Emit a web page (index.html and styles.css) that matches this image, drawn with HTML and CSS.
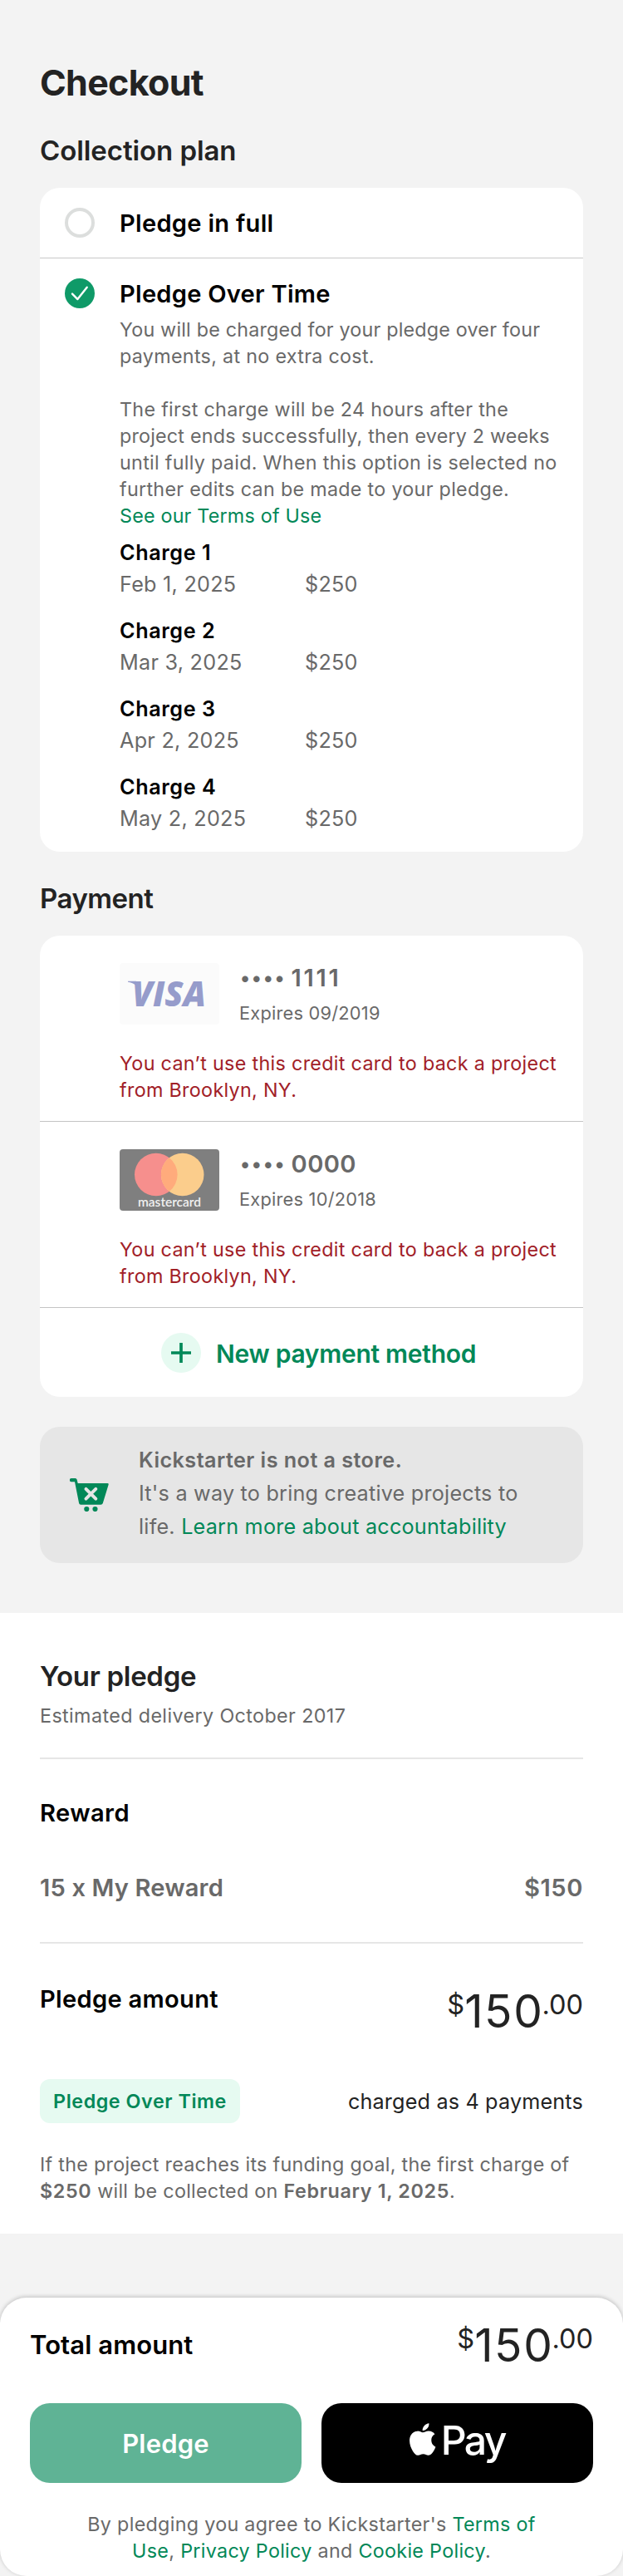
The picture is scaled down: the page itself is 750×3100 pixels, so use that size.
FILE: index.html
```html
<!DOCTYPE html>
<html lang="en">
<head>
<meta charset="utf-8">
<title>Checkout</title>
<link rel="stylesheet" href="styles.css">
</head>
<body>
<main class="page">
  <h1 class="title">Checkout</h1>

  <h2 class="heading">Collection plan</h2>
  <section class="card">
    <div class="plan">
      <span class="radio"></span>
      <h3 class="plan-name in-full">Pledge in full</h3>
    </div>
    <div class="plan plan-selected">
      <svg class="check" viewBox="0 0 36 36"><circle cx="18" cy="18" r="18" fill="#0f9a68"/><path d="M9 18.6l6.4 6.5L26.7 10.8" fill="none" stroke="#fff" stroke-width="2.4" stroke-linecap="round" stroke-linejoin="round"/></svg>
      <div class="plan-body">
        <h3 class="plan-name">Pledge Over Time</h3>
        <p class="plan-text"><span class="tight">You will be charged for your pledge over four</span><br>payments, at no extra cost.<br><br>The first charge will be 24 hours after the<br><span class="tight">project ends successfully, then every 2 weeks</span><br>until fully paid. When this option is selected no<br>further edits can be made to your pledge.<br><a class="link terms">See our Terms of Use</a></p>
        <div class="charges">
          <div class="charge"><b class="charge-name">Charge 1</b><span class="charge-date">Feb 1, 2025</span><span class="charge-sum">$250</span></div>
          <div class="charge"><b class="charge-name">Charge 2</b><span class="charge-date">Mar 3, 2025</span><span class="charge-sum">$250</span></div>
          <div class="charge"><b class="charge-name">Charge 3</b><span class="charge-date">Apr 2, 2025</span><span class="charge-sum">$250</span></div>
          <div class="charge"><b class="charge-name">Charge 4</b><span class="charge-date">May 2, 2025</span><span class="charge-sum">$250</span></div>
        </div>
      </div>
    </div>
  </section>

  <h2 class="heading heading-payment">Payment</h2>
  <section class="card">
    <div class="method">
      <div class="method-row">
        <svg class="brand" viewBox="0 0 120 74"><rect width="120" height="74" rx="4" fill="#fbfbfb"/><path d="M10 21.8h10l4 11c-2-5-7-9-14-10z" fill="#969ccb"/><text class="visa" x="15" y="52" textLength="89" lengthAdjust="spacingAndGlyphs">VISA</text></svg>
        <div class="method-info">
          <div class="number"><span class="dots"><i>•</i><i>•</i><i>•</i><i>•</i></span><span class="digits ones">1111</span></div>
          <div class="expires">Expires 09/2019</div>
        </div>
      </div>
      <p class="error">You can’t use this credit card to back a project<br>from Brooklyn, NY.</p>
    </div>
    <div class="method">
      <div class="method-row">
        <svg class="brand" viewBox="0 0 120 74"><rect width="120" height="74" rx="4" fill="#7f7f7f"/><circle cx="43.8" cy="30.5" r="25.8" fill="#f68f8d"/><circle cx="75.7" cy="30.5" r="25.8" fill="#fbcd8c"/><path d="M59.75 10.2a25.8 25.8 0 0 1 0 40.6a25.8 25.8 0 0 1 0-40.6z" fill="#ffab7c"/><text class="mastercard" x="22" y="69.4" textLength="76">mastercard</text></svg>
        <div class="method-info">
          <div class="number"><span class="dots"><i>•</i><i>•</i><i>•</i><i>•</i></span><span class="digits">0000</span></div>
          <div class="expires">Expires 10/2018</div>
        </div>
      </div>
      <p class="error">You can’t use this credit card to back a project<br>from Brooklyn, NY.</p>
    </div>
    <div class="add">
      <svg class="plus" viewBox="0 0 48 48"><circle cx="24" cy="24" r="24" fill="#e6faf1"/><path d="M24 12v24M12 24h24" stroke="#028858" stroke-width="3.7"/></svg>
      <span class="add-label">New payment method</span>
    </div>
  </section>

  <aside class="notice">
    <svg class="cart" viewBox="0 0 48 40"><path d="M2 0H6.6Q8.2 0 8.6 1.6L9.7 6H45.4Q47.1 6 46.6 7.8L39.8 30Q39.2 31.8 37.4 31.8H13.2Q11.5 31.8 11.1 30L6 4.2H2A2.1 2.1 0 0 1 2 0z" fill="#028858"/><circle cx="20.3" cy="37" r="3.1" fill="#028858"/><circle cx="30.5" cy="37" r="3.1" fill="#028858"/><path d="M19.5 12.9l11.8 11.8M31.3 12.9L19.5 24.7" stroke="#e6e6e6" stroke-width="4" stroke-linecap="round"/></svg>
    <p class="notice-text"><b>Kickstarter is not a store.</b><br>It's a way to bring creative projects to<br>life. <a class="link">Learn more about accountability</a></p>
  </aside>
</main>

<section class="summary">
  <h2 class="heading">Your pledge</h2>
  <p class="delivery">Estimated delivery October 2017</p>
  <hr class="rule">
  <h3 class="label">Reward</h3>
  <div class="reward-row"><span>15 x My Reward</span><span class="reward-sum">$150</span></div>
  <hr class="rule rule-second">
  <div class="amount-row">
    <h3 class="label pledge-label">Pledge amount</h3>
    <div class="price"><span class="small">$</span><span class="big">150</span><span class="small cents">.00</span></div>
  </div>
  <div class="plot-row">
    <span class="badge">Pledge Over Time</span>
    <span class="charged">charged as 4 payments</span>
  </div>
  <p class="goal">If the project reaches its funding goal, the first charge of<br><b>$250</b> will be collected on <b>February 1, 2025</b>.</p>
</section>

<footer class="sheet">
  <div class="total-row">
    <h3 class="total">Total amount</h3>
    <div class="price"><span class="small">$</span><span class="big">150</span><span class="small cents">.00</span></div>
  </div>
  <div class="buttons">
    <button class="button pledge">Pledge</button>
    <button class="button apple">
      <svg class="apple-logo" viewBox="2.2 0 19.6 24"><path fill="#fff" d="M12.152 6.896c-.948 0-2.415-1.078-3.96-1.04-2.04.027-3.91 1.183-4.961 3.014-2.117 3.675-.546 9.103 1.519 12.09 1.013 1.454 2.208 3.09 3.792 3.039 1.52-.065 2.09-.987 3.935-.987 1.831 0 2.35.987 3.96.948 1.637-.026 2.676-1.48 3.676-2.948 1.156-1.688 1.636-3.325 1.662-3.415-.039-.013-3.182-1.221-3.22-4.857-.026-3.04 2.48-4.494 2.597-4.559-1.429-2.09-3.623-2.324-4.39-2.376-2-.156-3.675 1.09-4.61 1.09zM15.53 3.83c.843-1.012 1.4-2.427 1.245-3.83-1.207.052-2.662.805-3.532 1.818-.78.896-1.454 2.338-1.273 3.714 1.338.104 2.715-.688 3.559-1.701"/></svg>
      <span class="pay">Pay</span>
    </button>
  </div>
  <p class="legal">By pledging you agree to Kickstarter's <a class="link">Terms of<br>Use</a>, <a class="link">Privacy Policy</a> and <a class="link">Cookie Policy</a>.</p>
</footer>
</body>
</html>
```
FILE: styles.css
```css
* {
  box-sizing: border-box;
}

body {
  margin: 0;
  background: #f3f3f3;
  color: #232323;
  font-family: Inter, "Liberation Sans", sans-serif;
  font-weight: 400;
  white-space: nowrap;
}

h1, h2, h3, p {
  margin: 0;
  font-weight: 600;
}

p {
  font-weight: 400;
}

b {
  font-weight: 600;
}

.link {
  color: #028858;
}

.page {
  padding: 73px 48px 60px;
}

.title {
  font-size: 43px;
  line-height: 52px;
  font-weight: 700;
  letter-spacing: -0.7px;
}

.heading {
  font-size: 33px;
  line-height: 40px;
  letter-spacing: -0.08px;
}

.title + .heading {
  margin-top: 36px;
}

.heading-payment {
  margin-top: 36px;
  letter-spacing: -0.49px;
}

.card {
  margin-top: 25px;
  border-radius: 24px;
  background: #fff;
  overflow: hidden;
}

/* Collection plan */
.plan {
  display: flex;
  gap: 30px;
  padding: 24px 24px 24px 30px;
}

.plan-selected {
  border-top: 1px solid #c8c8c8;
}

.radio {
  width: 36px;
  height: 36px;
  border: 4px solid #dcdedd;
  border-radius: 50%;
}

.check {
  flex: none;
  width: 36px;
  height: 36px;
}

.plan-name {
  height: 36px;
  color: #000;
  font-size: 29.1px;
  line-height: 38px;
  letter-spacing: 0.25px;
}

.in-full {
  letter-spacing: 0.28px;
}

.plan-text {
  margin-top: 10px;
  color: #696969;
  font-size: 23.3px;
  line-height: 32px;
  letter-spacing: 0.3px;
}

.terms,
.tight {
  letter-spacing: 0.2px;
}

.charges {
  display: flex;
  flex-direction: column;
  gap: 24px;
  margin-top: 12px;
}

.charge {
  display: grid;
  grid-template-columns: 223px auto;
  row-gap: 6px;
  color: #696969;
  font-size: 25.2px;
  line-height: 32px;
  letter-spacing: 0.26px;
}

.charge-name {
  grid-column: 1 / 3;
  color: #000;
  letter-spacing: 0.6px;
}

/* Payment methods */
.method {
  padding: 33px 24px 21px 96px;
  border-bottom: 1px solid #c4c4c4;
}

.method-row {
  display: flex;
  gap: 24px;
  height: 74px;
}

.brand {
  width: 120px;
  height: 74px;
}

.visa {
  fill: #969ccb;
  font: italic 800 42px "Open Sans", sans-serif;
}

.mastercard {
  fill: #f0f0f0;
  font: 600 15.5px Lato, sans-serif;
}

.number {
  display: flex;
  color: #696969;
  font-size: 29.1px;
  line-height: 35px;
  font-weight: 560;
}

.dots {
  display: flex;
  font-size: 24px;
}

.dots i {
  width: 13.9px;
  font-style: normal;
  text-align: center;
}

.digits {
  margin-left: 7px;
  letter-spacing: 0.4px;
}

.ones {
  letter-spacing: 2.7px;
}

.expires {
  margin-top: 10px;
  color: #696969;
  font-size: 21.8px;
  line-height: 30px;
  letter-spacing: 0.22px;
}

.error {
  margin-top: 31px;
  color: #a12027;
  font-size: 23.3px;
  line-height: 32px;
  letter-spacing: 0.32px;
}

.add {
  display: flex;
  align-items: center;
  gap: 18px;
  padding: 30px 0 29px 146px;
}

.plus {
  width: 48px;
  height: 48px;
}

.add-label {
  padding-top: 2px;
  color: #028858;
  font-size: 30px;
  line-height: 36px;
  font-weight: 600;
  letter-spacing: -0.28px;
}

.notice {
  display: flex;
  align-items: center;
  gap: 35px;
  height: 164px;
  margin-top: 36px;
  padding-left: 36px;
  border-radius: 24px;
  background: #e6e6e6;
}

.cart {
  width: 48px;
  height: 40px;
}

.notice-text {
  padding-bottom: 4px;
  color: #696969;
  font-size: 25.2px;
  line-height: 40px;
  letter-spacing: 0.22px;
}

.notice-text b {
  letter-spacing: 0.45px;
}

/* Pledge summary */
.summary {
  padding: 56px 48px 35px;
  background: #fff;
}

.summary .heading {
  letter-spacing: -0.3px;
}

.delivery {
  height: 32px;
  margin-top: 11px;
  color: #696969;
  font-size: 23.3px;
  line-height: 33px;
  letter-spacing: 0.39px;
}

.rule {
  height: 2px;
  margin: 35px 0 46px;
  border: 0;
  background: #e6e6e6;
}

.rule-second {
  margin: 48px 0;
}

.label {
  height: 36px;
  color: #000;
  font-size: 29.1px;
  line-height: 37px;
  letter-spacing: 0.42px;
}

.pledge-label {
  letter-spacing: 0.3px;
}

.reward-row {
  display: flex;
  justify-content: space-between;
  height: 36px;
  margin-top: 54px;
  color: #696969;
  font-size: 29.1px;
  line-height: 37px;
  font-weight: 560;
  letter-spacing: 0.15px;
}

.reward-sum {
  letter-spacing: 0.6px;
}

.amount-row {
  display: flex;
  justify-content: space-between;
}

.amount-row .price {
  margin-top: 1px;
}

.price {
  display: flex;
}

.small {
  font-size: 32.5px;
  line-height: 50px;
}

.big {
  font-size: 55px;
  line-height: 64px;
  letter-spacing: 1.6px;
}

.cents {
  margin-left: -2px;
}

.plot-row {
  display: flex;
  justify-content: space-between;
  align-items: center;
  margin-top: 50px;
}

.badge {
  width: 241px;
  border-radius: 12px;
  background: #e6faf1;
  color: #028858;
  font-size: 23.3px;
  line-height: 53px;
  font-weight: 600;
  letter-spacing: 0.56px;
  text-align: center;
}

.charged {
  font-size: 25.2px;
  letter-spacing: 0.17px;
}

.goal {
  margin-top: 34px;
  color: #696969;
  font-size: 23.3px;
  line-height: 32px;
  letter-spacing: 0.28px;
}

.goal b {
  letter-spacing: 0.65px;
}

/* Bottom sheet */
.sheet {
  margin-top: 77px;
  padding: 25px 36px 14px;
  border-radius: 32px;
  background: #fff;
  box-shadow: 0 -1px 5px rgba(0, 0, 0, 0.22);
}

.total-row {
  display: flex;
  justify-content: space-between;
  align-items: center;
}

.total {
  color: #000;
  font-size: 31px;
  line-height: 36px;
  letter-spacing: 0.1px;
}

.buttons {
  display: grid;
  grid-template-columns: 1fr 1fr;
  gap: 24px;
  margin-top: 38px;
}

.button {
  display: flex;
  justify-content: center;
  align-items: center;
  height: 96px;
  padding: 0;
  border: 0;
  border-radius: 24px;
  color: #fff;
  font-family: inherit;
}

.pledge {
  background: #5fb395;
  font-size: 31px;
  font-weight: 600;
  letter-spacing: 0.2px;
}

.apple {
  gap: 6px;
  background: #000;
}

.apple-logo {
  width: 31.5px;
  height: 39px;
  margin-bottom: 10px;
}

.pay {
  padding-bottom: 6px;
  font-size: 48.2px;
  line-height: 60px;
  font-weight: 500;
  letter-spacing: -2.6px;
}

.legal {
  margin-top: 34px;
  color: #696969;
  font-size: 23.3px;
  line-height: 32px;
  letter-spacing: 0.31px;
  text-align: center;
}
```
